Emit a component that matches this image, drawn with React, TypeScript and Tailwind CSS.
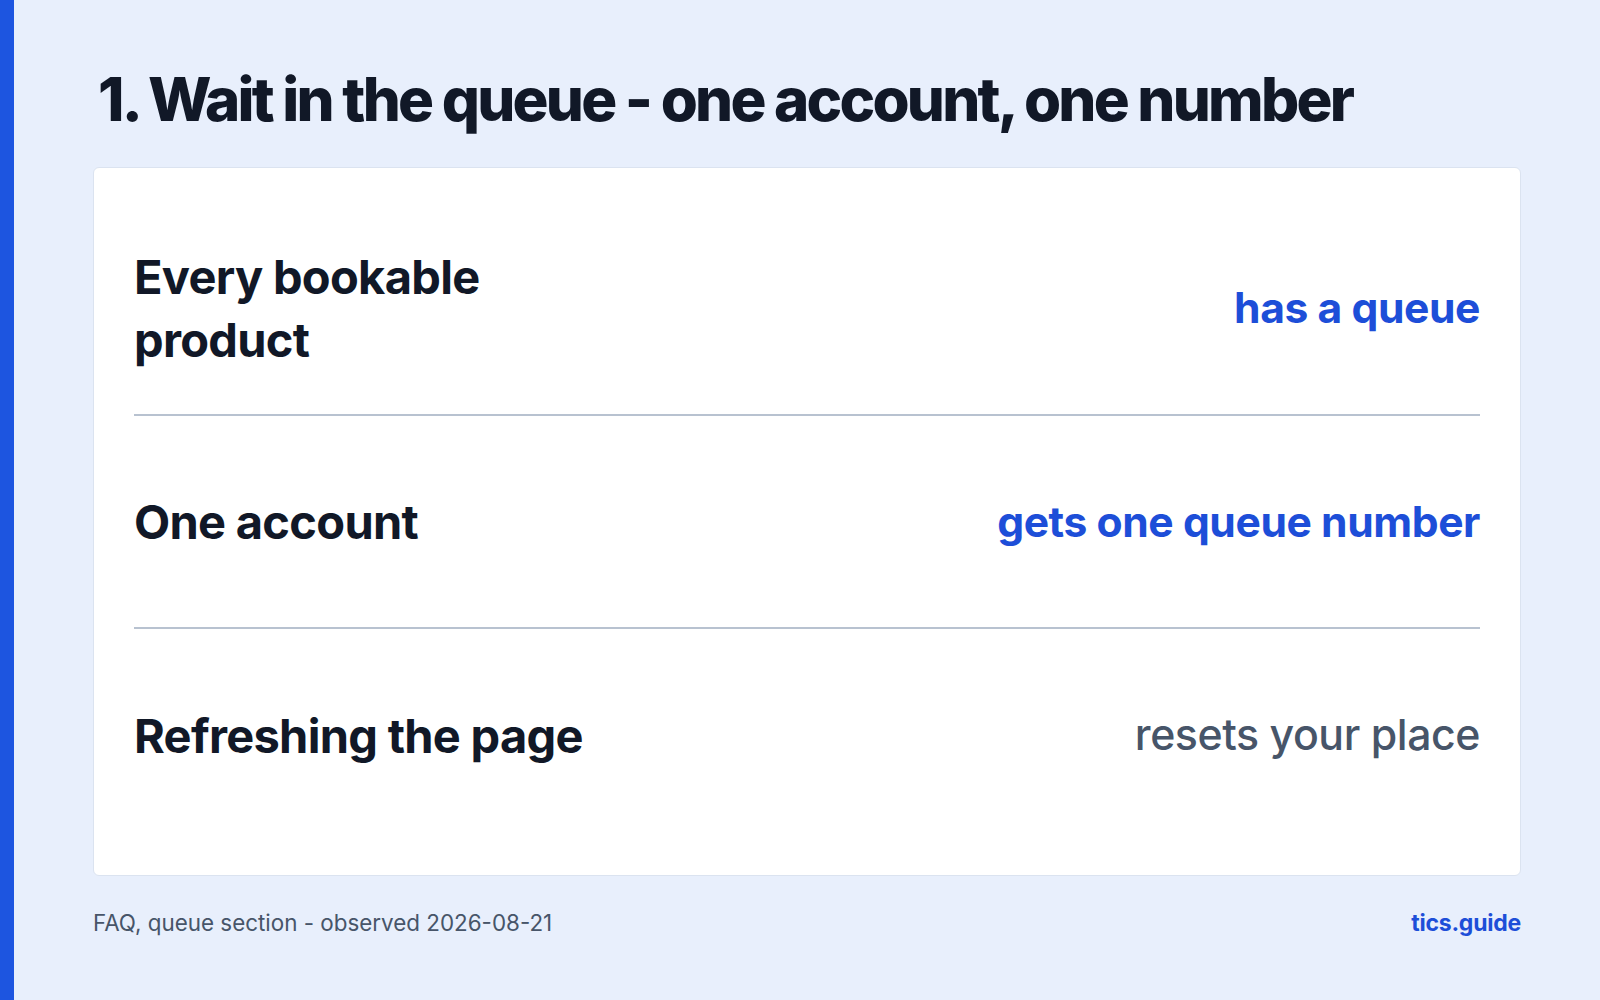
import React from 'react';

const rows = [
  { label: 'Every bookable product', value: 'has a queue', tone: 'blue' },
  { label: 'One account', value: 'gets one queue number', tone: 'blue' },
  { label: 'Refreshing the page', value: 'resets your place', tone: 'muted' },
];

export default function App() {
  return (
    <div
      className="h-screen w-full bg-[#e8effc] border-l-[14px] border-[#1d55e0] flex flex-col px-[79px] pt-[69px] pb-[61px]"
      style={{ fontFamily: 'Inter, "Noto Sans", sans-serif' }}
    >
      <h1 className="text-[60px] leading-[60px] font-extrabold tracking-[-0.046em] text-[#111827] pl-[5px]">
        1. Wait in the queue - one account, one number
      </h1>

      <div className="mt-[38px] flex-1 bg-white border border-[#dbe3f0] rounded-md px-10 py-[34px] flex flex-col">
        {rows.map((row, i) => (
          <React.Fragment key={row.label}>
            {i > 0 && <div className="h-[2px] bg-[#b8c2d0]" />}
            <div className="flex-1 flex items-center justify-between gap-8">
              <div className="max-w-[490px] text-[47px] leading-[63px] font-bold text-[#111827] tracking-[-0.015em]">
                {row.label}
              </div>
              <div
                className={
                  row.tone === 'blue'
                    ? 'text-[42.6px] font-bold text-[#1d4ed8] tracking-[-0.01em]'
                    : 'text-[42.8px] font-medium text-[#475569] tracking-[-0.01em]'
                }
              >
                {row.value}
              </div>
            </div>
          </React.Fragment>
        ))}
      </div>

      <div className="mt-[31px] flex items-center justify-between leading-8">
        <span className="text-[22.4px] text-[#475569]">FAQ, queue section - observed 2026-08-21</span>
        <span className="text-[23px] font-bold text-[#1d4ed8] tracking-[-0.01em]">tics.guide</span>
      </div>
    </div>
  );
}
